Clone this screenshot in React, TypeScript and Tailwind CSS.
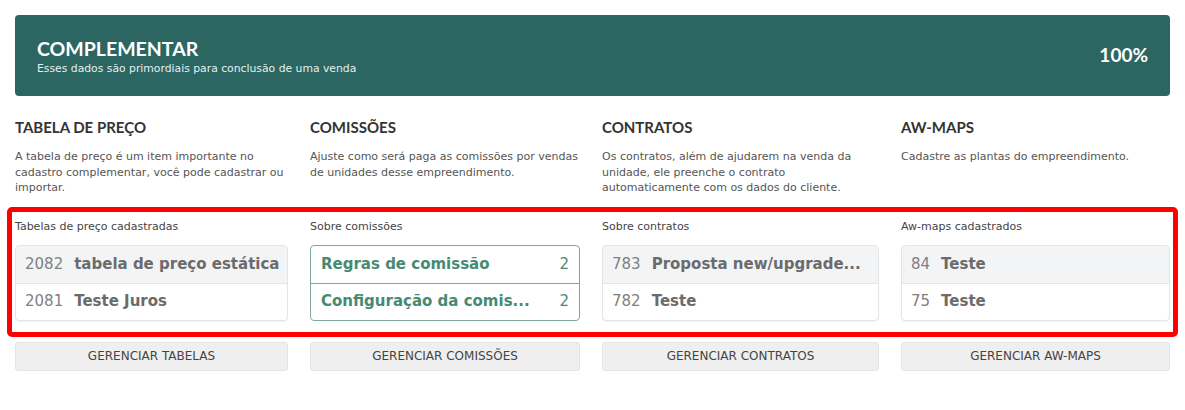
import React from 'react';

type Row = { num?: string; name: string; count?: string };

const columns: {
  title: string;
  desc: string;
  label: string;
  rows: Row[];
  green?: boolean;
  button: string;
}[] = [
  {
    title: 'TABELA DE PREÇO',
    desc: 'A tabela de preço é um item importante no cadastro complementar, você pode cadastrar ou importar.',
    label: 'Tabelas de preço cadastradas',
    rows: [
      { num: '2082', name: 'tabela de preço estática' },
      { num: '2081', name: 'Teste Juros' },
    ],
    button: 'GERENCIAR TABELAS',
  },
  {
    title: 'COMISSÕES',
    desc: 'Ajuste como será paga as comissões por vendas de unidades desse empreendimento.',
    label: 'Sobre comissões',
    rows: [
      { name: 'Regras de comissão', count: '2' },
      { name: 'Configuração da comis...', count: '2' },
    ],
    green: true,
    button: 'GERENCIAR COMISSÕES',
  },
  {
    title: 'CONTRATOS',
    desc: 'Os contratos, além de ajudarem na venda da unidade, ele preenche o contrato automaticamente com os dados do cliente.',
    label: 'Sobre contratos',
    rows: [
      { num: '783', name: 'Proposta new/upgrade...' },
      { num: '782', name: 'Teste' },
    ],
    button: 'GERENCIAR CONTRATOS',
  },
  {
    title: 'AW-MAPS',
    desc: 'Cadastre as plantas do empreendimento.',
    label: 'Aw-maps cadastrados',
    rows: [
      { num: '84', name: 'Teste' },
      { num: '75', name: 'Teste' },
    ],
    button: 'GERENCIAR AW-MAPS',
  },
];

const body = "font-['DejaVu_Sans',Verdana,sans-serif]";
const head = "font-['Lato',sans-serif]";
// columns in the screenshot are not quite equal
const cols = 'grid grid-cols-[273px_270px_277px_269px] justify-between';

function ListBox({ rows, green }: { rows: Row[]; green?: boolean }) {
  if (green) {
    return (
      <div className="rounded-[4px] border border-[#7fa89c] bg-white">
        {rows.map((r, i) => (
          <div
            key={i}
            className={`flex h-[37px] items-center justify-between px-[10px] text-[15px] text-[#468a73] ${i > 0 ? 'border-t border-[#7fa89c]' : ''}`}
          >
            <span className="font-bold">{r.name}</span>
            <span>{r.count}</span>
          </div>
        ))}
      </div>
    );
  }
  return (
    <div className="rounded-[4px] border border-[#e2e4e6] bg-white shadow-[0_1px_1px_rgba(0,0,0,0.04)]">
      {rows.map((r, i) => (
        <div
          key={i}
          className={`flex h-[37px] items-center gap-[11px] px-[9px] text-[15px] whitespace-nowrap ${i === 0 ? 'bg-[#f3f4f5] rounded-t-[4px]' : 'border-t border-[#e2e4e6]'}`}
        >
          <span className="text-[#808080]">{r.num}</span>
          <span className="font-bold text-[#6b6b6b]">{r.name}</span>
        </div>
      ))}
    </div>
  );
}

export default function App() {
  return (
    <div className={`min-h-[410px] bg-white px-[15px] pt-[15px] ${body}`}>
      <div className="flex h-[81px] items-center justify-between rounded-[4px] bg-[#2b6663] pl-[22px] pr-[22px]">
        <div className="pt-[1px]">
          <div className={`${head} text-[19.5px] font-bold leading-[24px] text-white`}>COMPLEMENTAR</div>
          <div className="text-[10.8px] leading-[15px] text-[#e6f0ef]">
            Esses dados são primordiais para conclusão de uma venda
          </div>
        </div>
        <div className={`${head} text-[19px] font-bold text-white`}>100%</div>
      </div>

      <div className={`mt-[21px] ${cols}`}>
        {columns.map((c) => (
          <div key={c.title}>
            <h2 className={`${head} text-[15px] font-bold leading-[20px] text-[#333]`}>{c.title}</h2>
            <p className="mt-[12px] text-[11px] leading-[15.5px] text-[#555]">{c.desc}</p>
          </div>
        ))}
      </div>

      <div className="-mx-[8px] mt-[11px] rounded-[5px] border-[5px] border-[#ff0000] px-[3px] pt-[7px] pb-[11px]">
        <div className={cols}>
          {columns.map((c) => (
            <div key={c.title}>
              <div className="text-[11px] leading-[15px] text-[#444]">{c.label}</div>
              <div className="mt-[11px]">
                <ListBox rows={c.rows} green={c.green} />
              </div>
            </div>
          ))}
        </div>
      </div>

      <div className={`mt-[5px] ${cols}`}>
        {columns.map((c) => (
          <button
            key={c.title}
            className="flex h-[29px] items-center justify-center rounded-[3px] border border-[#e4e4e4] bg-[#efefef] text-[12px] text-[#444]"
          >
            {c.button}
          </button>
        ))}
      </div>
    </div>
  );
}
